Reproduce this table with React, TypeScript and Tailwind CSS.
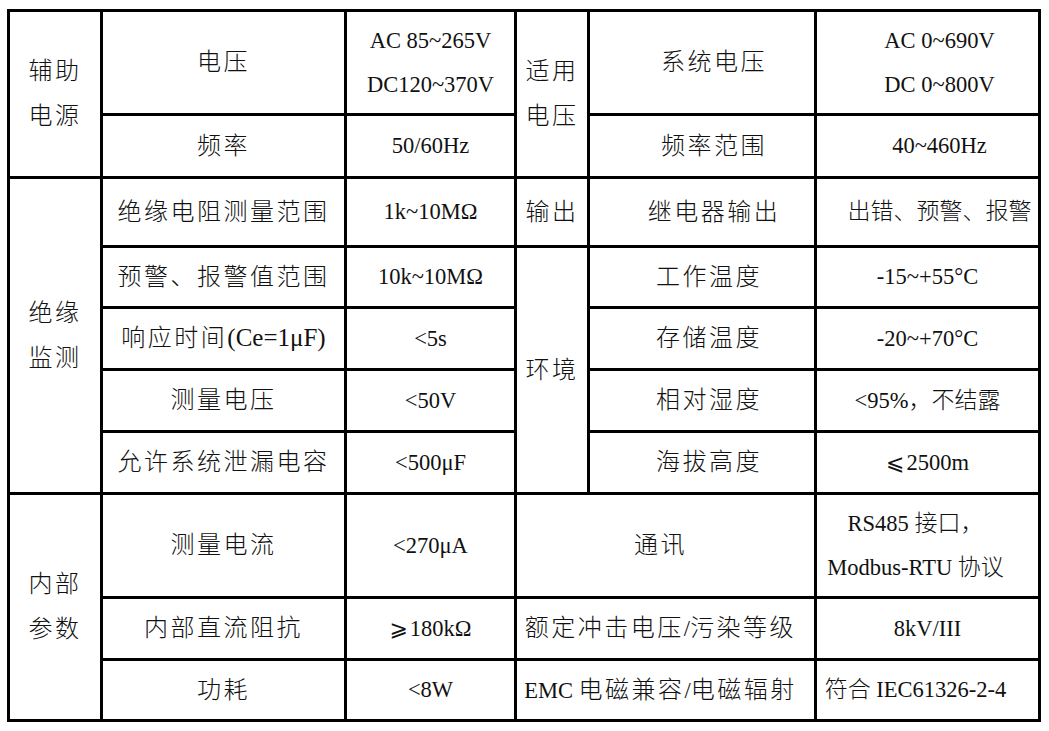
import React from "react";

function T({ s, v, big }: { s: string; v?: boolean; big?: boolean }) {
  const parts = s.split(/([\u3000-\u303f\u4e00-\u9fff\uff00-\uffef]+)/);
  return (
    <span>
      {parts.map((p, i) =>
        i % 2 === 1 ? (
          <span
            key={i}
            className={
              v
                ? "text-[23px] font-light tracking-normal"
                : "text-[24px] tracking-[2.5px] font-light"
            }
          >
            {p}
          </span>
        ) : (
          <span key={i} className={big ? "text-[25px]" : ""}>
            {p}
          </span>
        )
      )}
    </span>
  );
}

const base =
  "bg-white flex flex-col items-center justify-center text-center whitespace-nowrap leading-[44px]";

export default function App() {
  return (
    <div className="w-[1049px] h-[731px] bg-white pt-[9px] pl-[7px] text-[#111] text-[22.5px] font-['Liberation_Serif','Noto_Sans_CJK_SC',serif]">
      <div className="grid w-[1034px] bg-black p-[3px] gap-[3px] grid-cols-[90px_241px_167px_70px_224px_221px] grid-rows-[101px_60px_66px_58px_59px_59px_59px_101px_59px_58px]">
        {/* 辅助电源 */}
        <div className={`${base} col-start-1 row-start-1 row-span-2`}>
          <div><T s="辅助" /></div>
          <div><T s="电源" /></div>
        </div>
        <div className={`${base} col-start-2 row-start-1`}><div><T s="电压" /></div></div>
        <div className={`${base} col-start-3 row-start-1`}>
          <div>AC 85~265V</div>
          <div>DC120~370V</div>
        </div>
        <div className={`${base} col-start-4 row-start-1 row-span-2`}>
          <div><T s="适用" /></div>
          <div><T s="电压" /></div>
        </div>
        <div className={`${base} col-start-5 row-start-1 pl-[24px]`}><div><T s="系统电压" /></div></div>
        <div className={`${base} col-start-6 row-start-1 pl-[24px]`}>
          <div>AC 0~690V</div>
          <div>DC 0~800V</div>
        </div>

        <div className={`${base} col-start-2 row-start-2`}><div><T s="频率" /></div></div>
        <div className={`${base} col-start-3 row-start-2`}><div>50/60Hz</div></div>
        <div className={`${base} col-start-5 row-start-2 pl-[24px]`}><div><T s="频率范围" /></div></div>
        <div className={`${base} col-start-6 row-start-2 pl-[24px]`}><div>40~460Hz</div></div>

        {/* 绝缘监测 */}
        <div className={`${base} col-start-1 row-start-3 row-span-5`}>
          <div><T s="绝缘" /></div>
          <div><T s="监测" /></div>
        </div>
        <div className={`${base} col-start-2 row-start-3`}><div><T s="绝缘电阻测量范围" /></div></div>
        <div className={`${base} col-start-3 row-start-3`}><div>1k~10MΩ</div></div>
        <div className={`${base} col-start-4 row-start-3`}><div><T s="输出" /></div></div>
        <div className={`${base} col-start-5 row-start-3 pl-[24px]`}><div><T s="继电器输出" /></div></div>
        <div className={`${base} col-start-6 row-start-3 pl-[24px]`}><div><T v s="出错、预警、报警" /></div></div>

        <div className={`${base} col-start-2 row-start-4`}><div><T s="预警、报警值范围" /></div></div>
        <div className={`${base} col-start-3 row-start-4`}><div>10k~10MΩ</div></div>
        <div className={`${base} col-start-4 row-start-4 row-span-4`}><div><T s="环境" /></div></div>
        <div className={`${base} col-start-5 row-start-4 pl-[14px]`}><div><T s="工作温度" /></div></div>
        <div className={`${base} col-start-6 row-start-4`}><div>-15~+55°C</div></div>

        <div className={`${base} col-start-2 row-start-5`}><div><T big s="响应时间(Ce=1μF)" /></div></div>
        <div className={`${base} col-start-3 row-start-5`}><div>&lt;5s</div></div>
        <div className={`${base} col-start-5 row-start-5 pl-[14px]`}><div><T s="存储温度" /></div></div>
        <div className={`${base} col-start-6 row-start-5`}><div>-20~+70°C</div></div>

        <div className={`${base} col-start-2 row-start-6`}><div><T s="测量电压" /></div></div>
        <div className={`${base} col-start-3 row-start-6`}><div>&lt;50V</div></div>
        <div className={`${base} col-start-5 row-start-6 pl-[14px]`}><div><T s="相对湿度" /></div></div>
        <div className={`${base} col-start-6 row-start-6`}><div><T v s="<95%，不结露" /></div></div>

        <div className={`${base} col-start-2 row-start-7`}><div><T s="允许系统泄漏电容" /></div></div>
        <div className={`${base} col-start-3 row-start-7`}><div>&lt;500μF</div></div>
        <div className={`${base} col-start-5 row-start-7 pl-[14px]`}><div><T s="海拔高度" /></div></div>
        <div className={`${base} col-start-6 row-start-7`}>
          <div>
            <span className="font-['DejaVu_Sans'] text-[22px] mr-[2px]">⩽</span>2500m
          </div>
        </div>

        {/* 内部参数 */}
        <div className={`${base} col-start-1 row-start-8 row-span-3`}>
          <div><T s="内部" /></div>
          <div><T s="参数" /></div>
        </div>
        <div className={`${base} col-start-2 row-start-8`}><div><T s="测量电流" /></div></div>
        <div className={`${base} col-start-3 row-start-8`}><div>&lt;270μA</div></div>
        <div className={`${base} col-start-4 col-span-2 row-start-8 pr-[10px]`}><div><T s="通讯" /></div></div>
        <div className={`${base} col-start-6 row-start-8 pr-[24px] leading-[42px]`}>
          <div><T v s="RS485 接口，" /></div>
          <div><T v s="Modbus-RTU 协议" /></div>
        </div>

        <div className={`${base} col-start-2 row-start-9`}><div><T s="内部直流阻抗" /></div></div>
        <div className={`${base} col-start-3 row-start-9`}>
          <div>
            <span className="font-['DejaVu_Sans'] text-[22px] mr-[2px]">⩾</span>180kΩ
          </div>
        </div>
        <div className={`${base} col-start-4 col-span-2 row-start-9 pr-[10px]`}><div><T s="额定冲击电压/污染等级" /></div></div>
        <div className={`${base} col-start-6 row-start-9`}><div>8kV/III</div></div>

        <div className={`${base} col-start-2 row-start-10`}><div><T s="功耗" /></div></div>
        <div className={`${base} col-start-3 row-start-10`}><div>&lt;8W</div></div>
        <div className={`${base} col-start-4 col-span-2 row-start-10 pr-[10px]`}><div><T s="EMC 电磁兼容/电磁辐射" /></div></div>
        <div className={`${base} col-start-6 row-start-10 pr-[24px]`}><div><T v s="符合 IEC61326-2-4" /></div></div>
      </div>
    </div>
  );
}
